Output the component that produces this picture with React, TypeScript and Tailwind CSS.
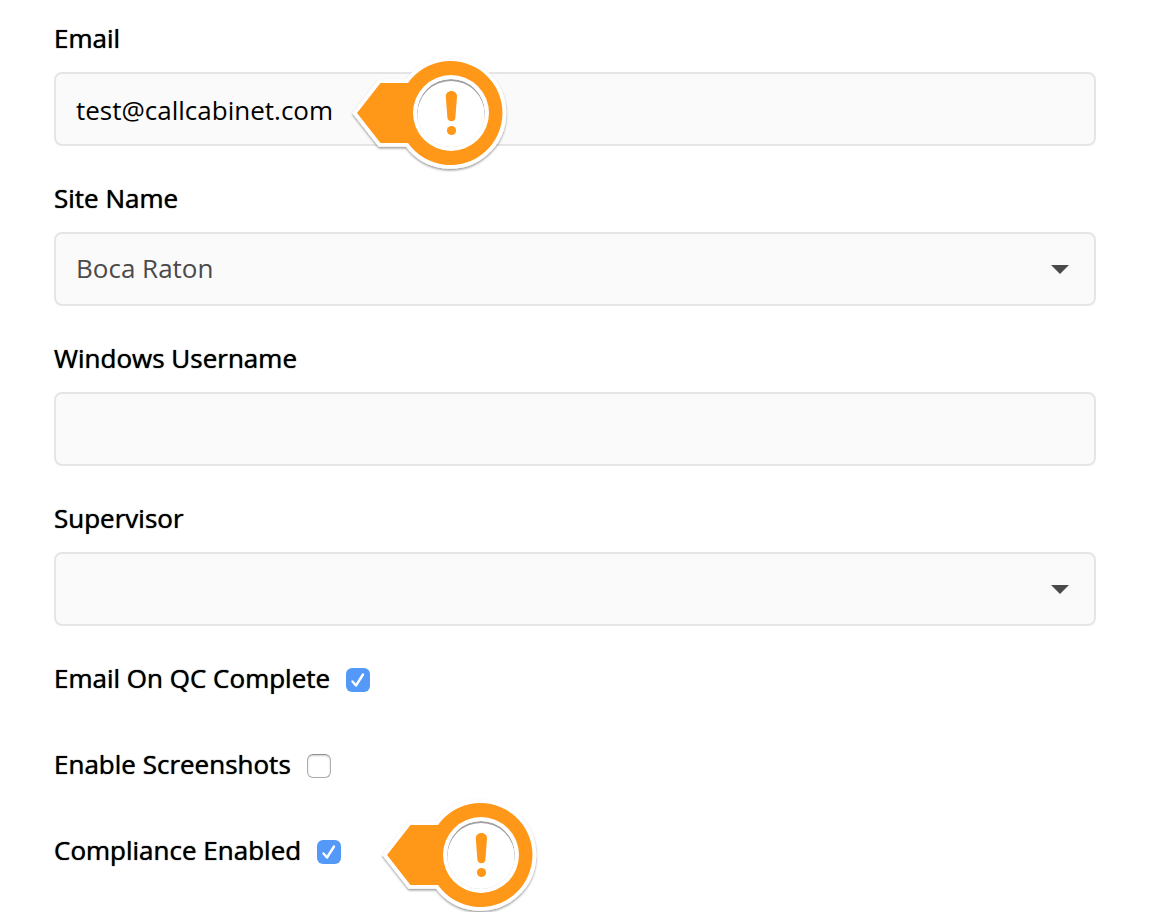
import { useId } from "react";
import type { ReactNode } from "react";

const LABEL = "text-[26px] leading-9 text-black [text-shadow:0_0_1px_#000000]";
const FIELD =
  "block h-[74px] w-full appearance-none rounded-lg border-2 border-[#e5e5e5] bg-[#fafafa] px-5 text-[26px] outline-none";
const INPUT = `${FIELD} pt-0.5 text-black`;
const SELECT = `${FIELD} pb-0.5 text-[#4a4a4a]`;

function Marker({ className }: { className: string }) {
  const id = useId();
  const shape = "M17 63 40.5 33H68A52 52 0 1 1 68 93H40.5Z";
  return (
    <svg
      aria-hidden="true"
      viewBox="0 0 180 130"
      className={`pointer-events-none absolute h-[130px] w-[180px] ${className}`}
    >
      <defs>
        <filter id={`${id}s`} x="-10%" y="-10%" width="120%" height="130%">
          <feDropShadow dx="0" dy="1.5" stdDeviation="0.8" floodColor="#000" floodOpacity="0.42" />
        </filter>
        <filter id={`${id}b`}>
          <feGaussianBlur stdDeviation="0.7" />
        </filter>
        <clipPath id={`${id}c`}>
          <circle cx="111" cy="63" r="34" />
        </clipPath>
      </defs>
      <path
        d={shape}
        fill="#fff"
        stroke="#fff"
        strokeWidth="7.5"
        strokeLinejoin="miter"
        filter={`url(#${id}s)`}
      />
      <path d={shape} fill="#ff9718" />
      <circle cx="111" cy="63" r="38" fill="#fff" />
      <g clipPath={`url(#${id}c)`}>
        <circle cx="111" cy="63" r="34" fill="#a0a0a0" />
        <circle cx="111" cy="64.6" r="33.7" fill="#fff" filter={`url(#${id}b)`} />
      </g>
      <path
        d="M105.8 46.5C105.8 43.3 108 41 111.4 41S117 43.3 117 46.5L115.4 67.5C115.1 70 113.7 71.2 111.4 71.2S107.7 70 107.4 67.5Z"
        fill="#ff9718"
      />
      <circle cx="111.5" cy="80.5" r="4.6" fill="#ff9718" />
    </svg>
  );
}

function Field({ id, label, children }: { id: string; label: string; children: ReactNode }) {
  return (
    <div className="flex flex-col gap-4">
      <label htmlFor={id} className={`self-start ${LABEL}`}>
        {label}
      </label>
      <div className="relative">{children}</div>
    </div>
  );
}

function Caret() {
  return (
    <svg
      aria-hidden="true"
      viewBox="0 0 18 9"
      className="pointer-events-none absolute top-[33px] right-[27px] h-[9px] w-[18px]"
    >
      <path d="M0 0H18L9 9Z" fill="#4a4a4a" />
    </svg>
  );
}

function Toggle({
  id,
  label,
  checked,
  children,
}: {
  id: string;
  label: string;
  checked?: boolean;
  children?: ReactNode;
}) {
  return (
    <div className="relative flex h-10 items-start gap-4">
      <label htmlFor={id} className={LABEL}>
        {label}
      </label>
      <span className="relative mt-2 size-6">
        <input
          id={id}
          type="checkbox"
          defaultChecked={checked}
          className="peer block size-6 appearance-none rounded-md border border-[#adadad] border-t-[#8f8f8f] bg-white shadow-[inset_0_1px_2px_#00000030] checked:border-0 checked:bg-[#5599f8] checked:shadow-none"
        />
        <svg
          aria-hidden="true"
          viewBox="0 0 24 24"
          fill="none"
          className="pointer-events-none absolute inset-0 hidden size-6 peer-checked:block"
        >
          <path
            d="M6.5 13.5 10 17.5 17 6.5"
            stroke="#fff"
            strokeWidth="2.4"
            strokeLinecap="round"
            strokeLinejoin="round"
          />
        </svg>
      </span>
      {children}
    </div>
  );
}

export default function App() {
  return (
    <main className="min-h-screen overflow-clip bg-white pt-5 pr-[60px] pb-10 pl-[54px] font-['Open_Sans','Noto_Sans',sans-serif]">
      <form className="flex flex-col gap-[34px]">
        <Field id="email" label="Email">
          <input id="email" type="email" defaultValue="test@callcabinet.com" className={INPUT} />
          <Marker className="-top-[22px] left-[286px]" />
        </Field>
        <Field id="site" label="Site Name">
          <select id="site" defaultValue="Boca Raton" className={SELECT}>
            <option>Boca Raton</option>
          </select>
          <Caret />
        </Field>
        <Field id="username" label="Windows Username">
          <input id="username" type="text" className={INPUT} />
        </Field>
        <Field id="supervisor" label="Supervisor">
          <select id="supervisor" defaultValue="" className={SELECT}>
            <option value="" />
          </select>
          <Caret />
        </Field>
        <div className="flex flex-col gap-[46px]">
          <Toggle id="qc" label="Email On QC Complete" checked />
          <Toggle id="screenshots" label="Enable Screenshots" />
          <Toggle id="compliance" label="Compliance Enabled" checked>
            <Marker className="-top-[40px] left-[316px]" />
          </Toggle>
        </div>
      </form>
    </main>
  );
}
